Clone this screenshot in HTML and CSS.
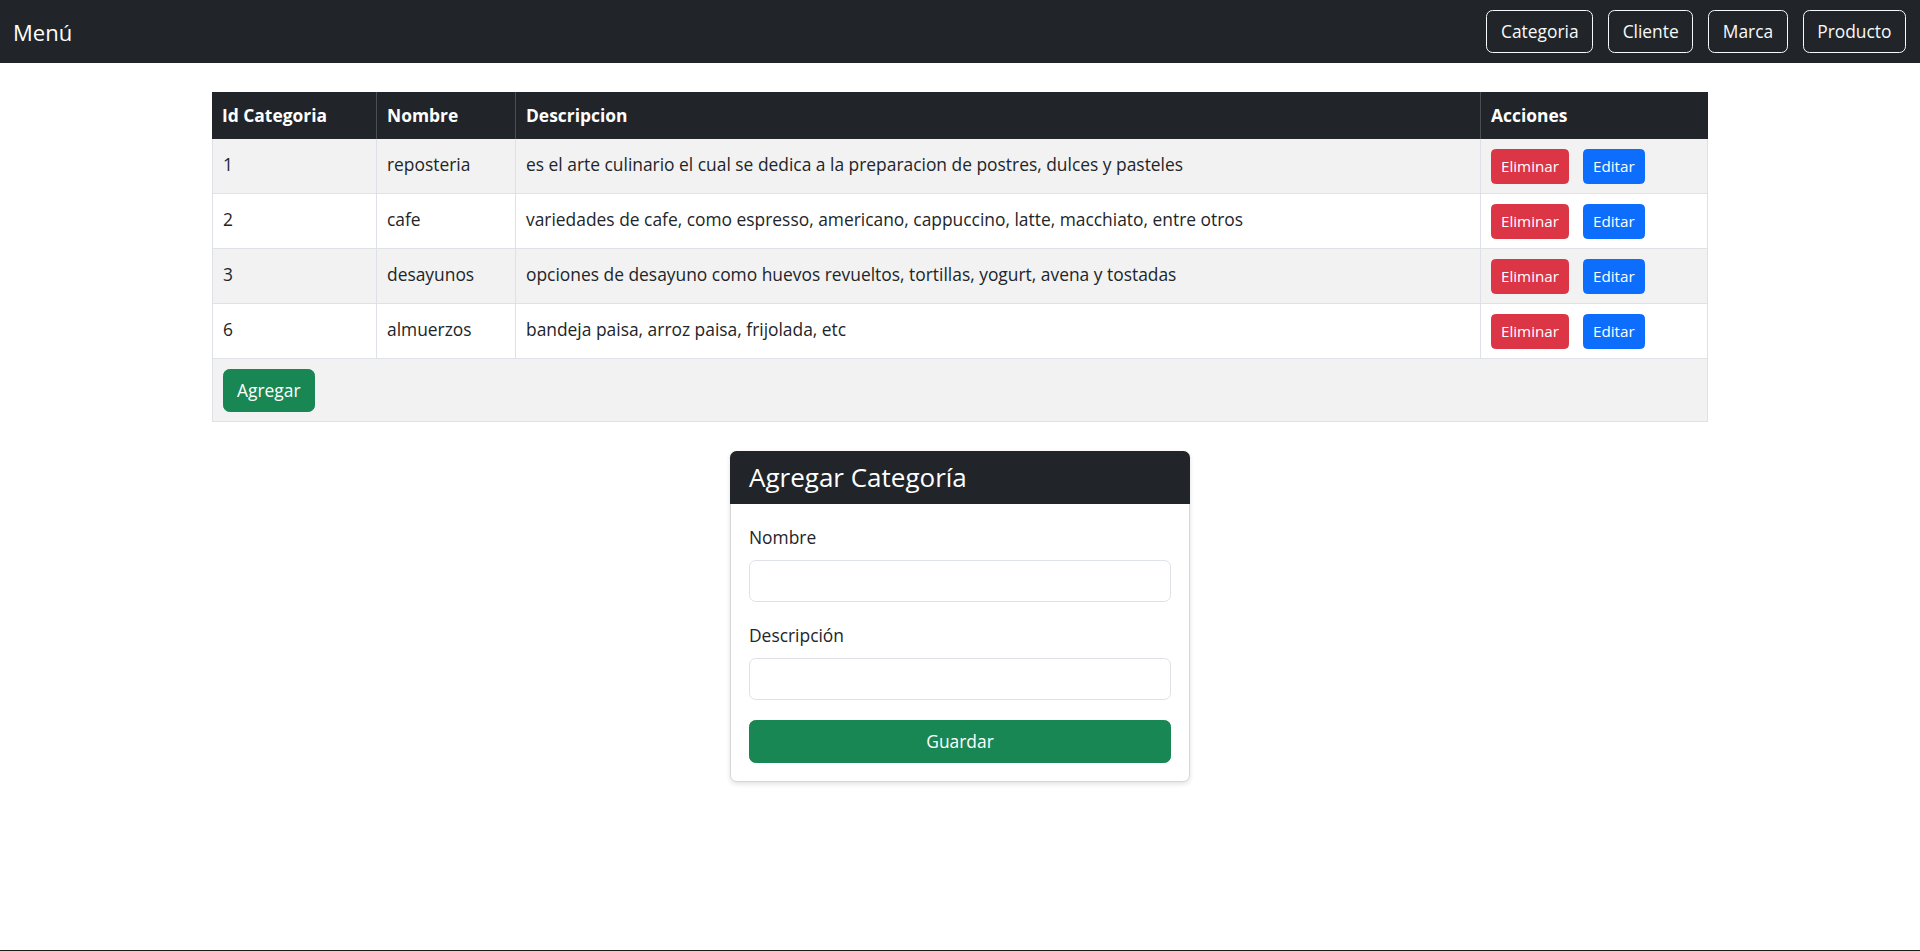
FILE: index.html
```html
<!DOCTYPE html>
<html lang="es">
<head>
<meta charset="utf-8">
<title>Menú</title>
<link rel="stylesheet" href="styles.css">
</head>
<body>
<nav class="navbar">
  <span class="brand">Menú</span>
  <div class="nav-links">
    <a class="btn btn-outline" href="#">Categoria</a>
    <a class="btn btn-outline" href="#">Cliente</a>
    <a class="btn btn-outline" href="#">Marca</a>
    <a class="btn btn-outline" href="#">Producto</a>
  </div>
</nav>
<main class="page">
  <table class="data-table">
    <colgroup>
      <col class="col-id">
      <col class="col-name">
      <col class="col-desc">
      <col class="col-act">
    </colgroup>
    <thead>
      <tr><th>Id Categoria</th><th>Nombre</th><th>Descripcion</th><th>Acciones</th></tr>
    </thead>
    <tbody>
      <tr class="odd">
        <td>1</td><td>reposteria</td><td>es el arte culinario el cual se dedica a la preparacion de postres, dulces y pasteles</td>
        <td class="act"><div class="actions"><button class="btn-sm btn-danger">Eliminar</button><button class="btn-sm btn-primary">Editar</button></div></td>
      </tr>
      <tr>
        <td>2</td><td>cafe</td><td>variedades de cafe, como espresso, americano, cappuccino, latte, macchiato, entre otros</td>
        <td class="act"><div class="actions"><button class="btn-sm btn-danger">Eliminar</button><button class="btn-sm btn-primary">Editar</button></div></td>
      </tr>
      <tr class="odd">
        <td>3</td><td>desayunos</td><td>opciones de desayuno como huevos revueltos, tortillas, yogurt, avena y tostadas</td>
        <td class="act"><div class="actions"><button class="btn-sm btn-danger">Eliminar</button><button class="btn-sm btn-primary">Editar</button></div></td>
      </tr>
      <tr>
        <td>6</td><td>almuerzos</td><td>bandeja paisa, arroz paisa, frijolada, etc</td>
        <td class="act"><div class="actions"><button class="btn-sm btn-danger">Eliminar</button><button class="btn-sm btn-primary">Editar</button></div></td>
      </tr>
    </tbody>
    <tfoot>
      <tr><td colspan="4" class="foot"><button class="btn btn-success">Agregar</button></td></tr>
    </tfoot>
  </table>

  <section class="card">
    <header class="card-header"><h4 class="card-title">Agregar Categoría</h4></header>
    <form class="card-body">
      <div class="field">
        <label class="label" for="nombre">Nombre</label>
        <input class="input" id="nombre" type="text">
      </div>
      <div class="field">
        <label class="label" for="descripcion">Descripción</label>
        <input class="input" id="descripcion" type="text">
      </div>
      <button type="button" class="btn btn-success btn-block">Guardar</button>
    </form>
  </section>
</main>
</body>
</html>
```
FILE: styles.css
```css
* { box-sizing: border-box; }

html, body {
  margin: 0;
  padding: 0;
}

body {
  font-family: "Open Sans", "Noto Sans", sans-serif;
  font-size: 17.4px;
  line-height: 1.5;
  color: #212529;
  background: #fff;
  min-height: 100vh;
}

body::after {
  content: "";
  position: fixed;
  left: 0;
  right: 0;
  bottom: 0;
  height: 1px;
  background: #1c1c1c;
}

.navbar {
  height: 63px;
  background: #212529;
  display: flex;
  align-items: center;
  justify-content: space-between;
  padding: 0 14px 0 13px;
}

.brand {
  color: #fff;
  font-size: 22px;
  line-height: 33px;
  padding-top: 2px;
}

.nav-links {
  display: flex;
  gap: 15px;
}

.btn {
  display: inline-block;
  font-family: inherit;
  font-size: 17.4px;
  line-height: 26.4px;
  padding: 7.5px 14px;
  border-radius: 6.6px;
  border: 1px solid transparent;
  text-decoration: none;
  cursor: pointer;
}

.btn-outline {
  color: #f8f9fa;
  border-color: #f8f9fa;
  background: transparent;
  padding: 7px 13.5px;
}

.btn-success {
  background: #198754;
  border-color: #198754;
  color: #fff;
  padding-left: 13px;
  padding-right: 13px;
}

.btn-block {
  display: block;
  width: 100%;
  height: 43px;
  margin-top: 20px;
}

.page {
  padding: 29px 0;
}

.data-table {
  width: 1496px;
  margin: 0 auto;
  border-collapse: separate;
  border-spacing: 0;
  table-layout: fixed;
}

.col-id { width: 165px; }
.col-name { width: 139px; }
.col-desc { width: 965px; }
.col-act { width: 227px; }

.data-table th {
  background: #212529;
  color: #fff;
  font-weight: 700;
  text-align: left;
  padding: 10px 10px 10.5px;
  line-height: 26px;
  border-right: 1px solid #4b4f53;
}

.data-table th:last-child { border-right: none; }

.data-table td {
  padding: 12px 10px 9px;
  line-height: 26px;
  vertical-align: top;
  border-right: 1px solid #dee2e6;
  border-bottom: 1px solid #dee2e6;
  background: #fff;
}

.data-table td:first-child { border-left: 1px solid #dee2e6; }

.data-table tr.odd td { background: #f2f2f2; }

.data-table td.act {
  padding: 10px 10px 9px;
}

.actions {
  display: flex;
  gap: 14px;
  height: 35px;
}

.btn-sm {
  font-family: inherit;
  font-size: 15.2px;
  line-height: 23px;
  padding: 5px 9px;
  border-radius: 4.4px;
  border: 1px solid transparent;
  color: #fff;
  cursor: pointer;
}

.btn-danger { background: #dc3545; border-color: #dc3545; }
.btn-primary { background: #0d6efd; border-color: #0d6efd; }

.data-table td.foot {
  background: #f2f2f2;
  padding: 10px 10px 9px;
  border-left: 1px solid #dee2e6;
}

.card {
  width: 460px;
  margin: 29px auto 0;
  border: 1px solid #d6d6d6;
  border-radius: 6.6px;
  box-shadow: 0 2px 5px rgba(0, 0, 0, 0.12);
  background: #fff;
}

.card-header {
  margin: -1px -1px 0;
  height: 53px;
  background: #212529;
  border-radius: 6.6px 6.6px 0 0;
  display: flex;
  align-items: center;
  padding: 0 19px;
}

.card-title {
  margin: 0;
  color: #fff;
  font-size: 26px;
  font-weight: 400;
  line-height: 1.2;
}

.card-body {
  padding: 20px 18px 18px;
}

.field {
  margin-bottom: 20px;
}

.field:last-of-type { margin-bottom: 0; }

.label {
  display: block;
  line-height: 26px;
  margin-bottom: 10px;
}

.input {
  display: block;
  width: 100%;
  height: 42px;
  border: 1px solid #dee2e6;
  border-radius: 6.6px;
  padding: 6px 13px;
  font-family: inherit;
  font-size: 17.4px;
  background: #fff;
}
```
